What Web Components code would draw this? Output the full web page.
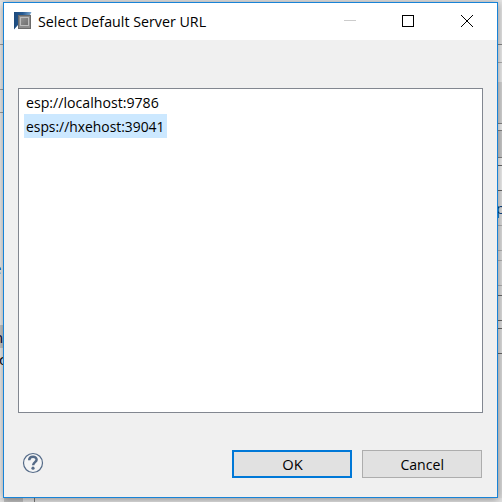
<!DOCTYPE html>
<html lang="en"><head><meta charset="utf-8"><title>Select Default Server URL</title>
<style>html,body{margin:0;width:502px;height:502px;overflow:hidden;background:#d6d6d6}</style></head>
<body><app-desktop></app-desktop>
<script>
const define=(name,html)=>customElements.define(name,class extends HTMLElement{
  constructor(){super();this.attachShadow({mode:'open'}).innerHTML=html;}
});
define('app-backdrop',`<style>:host{display:block;width:502px;height:502px}svg{display:block}</style>
<svg width="502" height="502" shape-rendering="crispEdges">
<rect width="502" height="502" fill="#efefef"/><rect width="502" height="2" fill="#e6e6e6"/>
<path d="M0 44.5h4M0 89.5h4M0 112.5h4" stroke="#a0a0a0"/>
<rect y="325" width="4" height="23" fill="#c8c8c8"/>
<rect x="498" y="2" width="4" height="42" fill="#e4e4e4"/>
<rect x="498" y="45" width="4" height="37" fill="#ececec"/>
<rect x="498" y="82" width="4" height="41" fill="#d4d4d4"/>
<rect x="498" y="131" width="4" height="26" fill="#cacaca"/>
<rect x="498" y="191" width="4" height="170" fill="#dedede"/>
<rect x="498" y="354" width="4" height="148" fill="#dadada"/>
<path d="M498 44.5h4M498 123.5h4M498 130.5h4M498 157.5h4" stroke="#858585"/>
<path d="M498 62.5h4M498 225.5h4M498 250.5h4M498 260.5h4M498 285.5h4" stroke="#b0b0b0"/>
<path d="M498 165.5h4M498 190.5h4M498 295.5h4M498 320.5h4M498 328.5h4M498 353.5h4" stroke="#666"/>
<rect y="498" width="502" height="4" fill="#e2e2e2"/>
<rect x="4" y="498" width="19" height="4" fill="#bebebe"/><path d="M34.5 498v4" stroke="#777"/>
</svg>`);
define('app-icon',`<style>:host{display:block;width:18px;height:18px}svg{display:block}</style>
<svg width="18" height="18" viewBox="0 0 18 18"><defs><linearGradient id="b" x2="1" y2="0"><stop stop-color="#1d4a7c"/><stop offset=".5" stop-color="#265a92"/><stop offset="1" stop-color="#7ea8cf"/></linearGradient><linearGradient id="g" x2="1" y2="1"><stop stop-color="#969696"/><stop offset="1" stop-color="#6c6c6c"/></linearGradient></defs>
<path d="M0 0H17.5L15.5 4H4V13L0 17.5Z" fill="url(#b)"/><rect x="4" y="3" width="13" height="14" fill="#6a6a6a"/><rect x="5" y="4" width="11" height="12" fill="#8c8c8c"/><rect x="6.5" y="5.5" width="8" height="8" fill="url(#g)" stroke="#bdbdbd"/></svg>`);
define('fit-text',`<style>:host{display:inline-block;transform:scaleX(var(--sx,1));transform-origin:var(--o,0) 50%;white-space:nowrap}</style><slot></slot>`);
define('title-bar',`<style>:host{display:flex;height:37px;background:#fff;align-items:flex-start}
app-icon{margin:9px 0 0 10px}.t{margin:6px 0 0 6px;width:306px;line-height:24px;font-size:15px;--sx:.95;color:#000}svg{display:block}</style>
<app-icon></app-icon><div class="t"><fit-text><slot></slot></fit-text></div>
<svg width="153" height="37" fill="none"><path d="M0 17.5h12" stroke="#ccc"/><rect x="58.5" y="12.5" width="11" height="11" stroke="#000" shape-rendering="crispEdges"/><path d="M117 12L129 24M129 12L117 24" stroke="#000" stroke-width="1"/></svg>`);
define('url-list',`<style>:host{display:flex;flex-direction:column;align-items:flex-start;box-sizing:border-box;width:465px;height:325px;background:#fff;border:1px solid #828790;padding:1px 5px}</style><slot></slot>`);
define('url-item',`<style>:host{display:block;box-sizing:border-box;width:143px;height:24px;line-height:24px;padding:0 2px;font-size:15px;white-space:nowrap;color:#000}:host([selected]){background:#cce8ff}</style><fit-text><slot></slot></fit-text>`);
define('help-button',`<style>:host{display:block;width:22px;height:22px}svg{display:block}</style>
<svg width="22" height="22" fill="none" stroke="#556b88"><circle cx="11" cy="11" r="9.5" stroke-width="1.2" fill="#f4f5f6"/><path d="M7.2 8.2C7.2 3.6 14.7 3.6 14.6 7.7C14.6 10.1 11.1 10.2 11.1 13.3" stroke-width="2.5"/><circle cx="11" cy="16.2" r="1.6" fill="#556b88" stroke="none"/></svg>`);
define('push-button',`<style>:host{display:block;box-sizing:border-box;width:120px;height:28px;background:#e1e1e1;border:1px solid #adadad;text-align:center;font-size:15px;line-height:27px;color:#000;--o:50%;--sx:.94}:host([primary]){border:2px solid #0078d7;line-height:25px;--sx:.98}</style><fit-text><slot></slot></fit-text>`);
define('dialog-window',`<style>:host{display:flex;flex-direction:column;box-sizing:border-box;width:495px;height:496px;background:#f0f0f0;border:1px solid #1883d7;box-shadow:0 1px 8px #0006;font-family:"Open Sans","Noto Sans",sans-serif}
.body{padding:48px 14px 0}.foot{display:flex;gap:10px;padding:37px 15px 0 18px}help-button{margin:2px auto 0 0}
.l1{--sx:.943}.l2{--sx:.924}</style>
<title-bar>Select Default Server URL</title-bar>
<div class="body"><url-list><url-item class="l1">esp://localhost:9786</url-item><url-item class="l2" selected>esps://hxehost:39041</url-item></url-list></div>
<div class="foot"><help-button></help-button><push-button primary>OK</push-button><push-button>Cancel</push-button></div>`);
define('app-desktop',`<style>:host{display:grid;width:502px;height:502px;overflow:hidden}app-backdrop,dialog-window,.bits{grid-area:1/1}dialog-window{margin:2px 0 0 3px;z-index:1}
.bits{position:relative;font:15px/20px "Open Sans",sans-serif;color:#000}.bits span{position:absolute}</style>
<app-backdrop></app-backdrop><div class="bits"><span style="left:-7px;top:258px;color:#003c9b">e</span><span style="left:-6px;top:327px;color:#003">n</span><span style="left:-1px;top:349px">c</span><span style="left:496px;top:198px;color:#003c7b">p</span></div><dialog-window></dialog-window>`);
</script></body></html>
